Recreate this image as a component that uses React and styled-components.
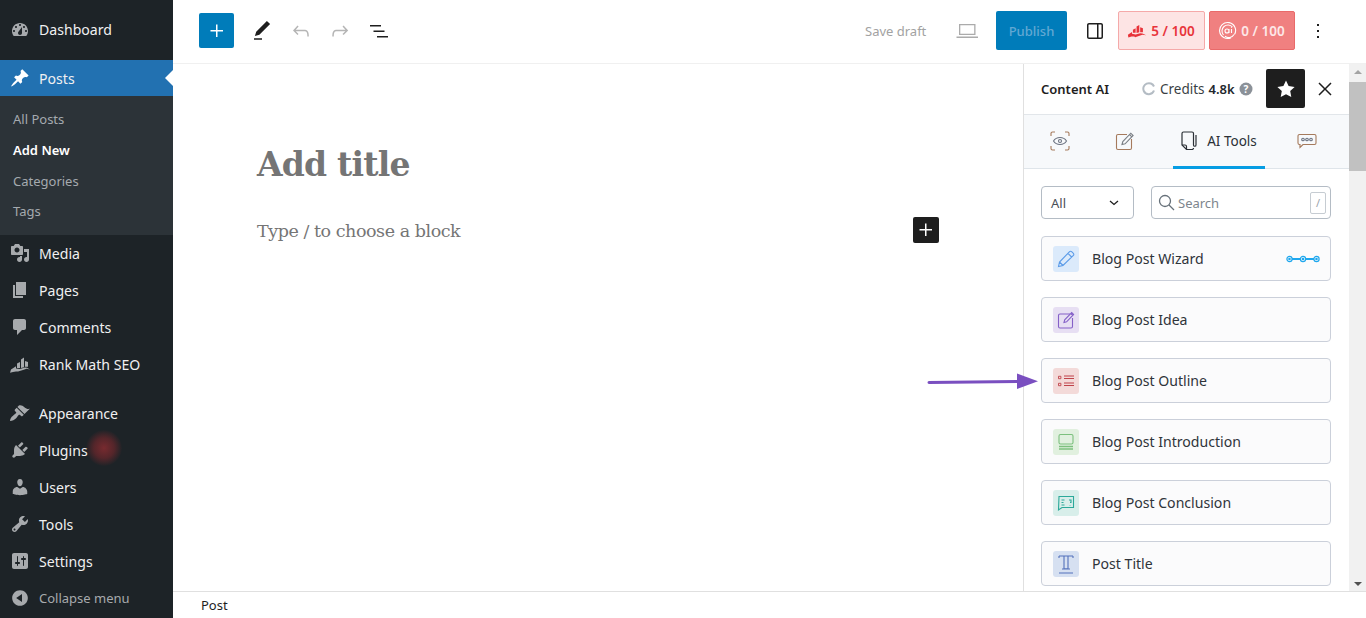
import React from "react";
import styled, { createGlobalStyle } from "styled-components";

const Global = createGlobalStyle`
  html, body { margin: 0; padding: 0; height: 100%; overflow: hidden; background: #fff; }
  * { box-sizing: border-box; }
  body { font-family: "Noto Sans", "Open Sans", sans-serif; }
`;

const Page = styled.div`
  position: relative;
  display: flex;
  width: 1366px;
  height: 618px;
  overflow: hidden;
`;

/* ---------- admin menu ---------- */
const Side = styled.nav`
  flex: 0 0 173px;
  background: #1d2327;
  padding-top: 11px;
  display: flex;
  flex-direction: column;
`;
const MenuRow = styled.div`
  position: relative;
  height: ${p => p.$h || 37}px;
  margin-top: ${p => p.$mt || 0}px;
  display: flex;
  align-items: center;
  padding-left: 10px;
  gap: 9px;
  font-size: 14.1px;
  color: ${p => (p.$dim ? "#a7aaad" : "#f0f0f1")};
  background: ${p => (p.$active ? "#2271b1" : "transparent")};
  svg { flex: 0 0 20px; fill: ${p => (p.$active ? "#fff" : "#a7aaad")}; }
  ${p => p.$dim && "font-size:13px;"}
`;
const CurrentNotch = styled.span`
  position: absolute;
  right: 0;
  top: 10px;
  border: 8px solid transparent;
  border-right-color: #fff;
  border-left-width: 0;
`;
const SubMenu = styled.div`
  background: #2c3338;
  padding: 8px 0 8px 13px;
`;
const SubItem = styled.div`
  height: 30.7px;
  display: flex;
  align-items: center;
  font-size: 13px;
  color: ${p => (p.$on ? "#fff" : "#a5aaaf")};
  font-weight: ${p => (p.$on ? 600 : 400)};
`;
const Glow = styled.span`
  position: absolute;
  left: 86px;
  top: -2px;
  width: 36px;
  height: 36px;
  border-radius: 50%;
  background: radial-gradient(circle, rgba(150,45,50,.75) 0%, rgba(130,40,45,.55) 40%, rgba(120,40,45,0) 72%);
`;
const Dash = ({ d, children }) => (
  <svg width="20" height="20" viewBox="0 0 20 20">{d ? <path d={d} /> : children}</svg>
);

/* ---------- main ---------- */
const Main = styled.div`
  flex: 1;
  min-width: 0;
  display: flex;
  flex-direction: column;
`;
const TopBar = styled.header`
  flex: 0 0 64px;
  border-bottom: 1px solid #f0f0f0;
  display: flex;
  align-items: center;
  padding: 0 29px 2px 26px;
`;
const Cluster = styled.div`
  display: flex;
  align-items: center;
  margin-left: ${p => p.$auto ? "auto" : "0"};
`;
const AddButton = styled.button`
  width: 35px;
  height: 35px;
  margin-right: 8px;
  border: 0;
  border-radius: 2px;
  background: #007cba;
  display: flex;
  align-items: center;
  justify-content: center;
  padding: 0;
  svg { fill: #fff; }
`;
const ToolIcon = styled.span`
  width: 39px;
  display: flex;
  justify-content: center;
  margin-left: ${p => p.$ml || 0}px;
  svg { fill: ${p => p.$c || "#1e1e1e"}; }
`;
const SaveDraft = styled.span`
  font-size: 13px;
  color: #a2a2a2;
  width: 63px;
  white-space: nowrap;
`;
const Publish = styled.button`
  width: 71px;
  height: 39px;
  margin: 0 8px 0 10px;
  border: 0;
  border-radius: 2px;
  background: #007cba;
  color: #62a8d3;
  font: 500 13px "Noto Sans", sans-serif;
  padding: 0;
`;
const Score = styled.button`
  width: ${p => p.$w}px;
  height: 39px;
  margin-left: ${p => p.$ml}px;
  border: 1px solid ${p => p.$line};
  border-radius: 2px;
  background: ${p => p.$bg};
  color: ${p => p.$fg};
  font: 600 13.5px "Noto Sans", sans-serif;
  display: flex;
  align-items: center;
  justify-content: center;
  gap: 4px;
  padding: 0 1px 0 0;
  white-space: nowrap;
`;
const Body = styled.div`
  flex: 1;
  min-height: 0;
  display: flex;
`;
const Canvas = styled.main`
  flex: 1;
  padding: 78px 84px 0;
`;
const Title = styled.h1`
  margin: 0;
  font: 700 33px/45px "DejaVu Serif", serif;
  letter-spacing: -.8px;
  color: #757575;
  white-space: nowrap;
`;
const BlockRow = styled.div`
  margin-top: 30px;
  display: flex;
  align-items: center;
  justify-content: space-between;
  height: 26px;
  width: 682px;
  font: 400 17.5px "DejaVu Serif", serif;
  letter-spacing: -.45px;
  color: #757575;
`;
const Placeholder = styled.span`
  padding-top: 1px;
`;
const BlockAdd = styled.span`
  width: 26px;
  height: 26px;
  background: #1e1e1e;
  border-radius: 2px;
  display: flex;
  align-items: center;
  justify-content: center;
  svg { fill: #fff; }
`;

/* ---------- Content AI panel ---------- */
const Panel = styled.aside`
  flex: 0 0 343px;
  border-left: 1px solid #e0e0e0;
  display: flex;
`;
const PanelInner = styled.div`
  flex: 1;
  min-width: 0;
  display: flex;
  flex-direction: column;
  overflow: hidden;
`;
const PanelHead = styled.div`
  flex: 0 0 51px;
  display: flex;
  align-items: center;
  padding: 0 0 1px 17px;
  border-bottom: 1px solid #e2e6ea;
`;
const HeadTitle = styled.strong`
  font-size: 13px;
  font-weight: 600;
  color: #1e1e1e;
  width: 101px;
`;
const Credits = styled.span`
  display: flex;
  align-items: center;
  font-size: 13.5px;
  color: #3a3f45;
  gap: 4px;
  width: 124px;
  b { font-weight: 600; color: #23282d; font-size: 13px; }
`;
const StarBtn = styled.span`
  width: 39px;
  height: 39px;
  background: #1e1e1e;
  border-radius: 2px;
  display: flex;
  align-items: center;
  justify-content: center;
  svg { fill: #fff; }
`;
const CloseBtn = styled.span`
  width: 40px;
  display: flex;
  justify-content: center;
  svg { fill: #1e1e1e; }
`;
const Tabs = styled.div`
  flex: 0 0 54px;
  display: flex;
  background: #f7f9fb;
  border-bottom: 1px solid #dfe5ea;
`;
const Tab = styled.div`
  width: ${p => p.$w}px;
  margin-left: ${p => p.$ml || 0}px;
  margin-bottom: -1px;
  display: flex;
  align-items: center;
  justify-content: center;
  gap: 9px;
  font-size: 13.5px;
  color: #2b3036;
  border-bottom: ${p => (p.$on ? "3px solid #069de3" : "3px solid transparent")};
`;
const Filters = styled.div`
  display: flex;
  gap: 17px;
  padding: 17px 18px 17px 17px;
`;
const SelectBox = styled.div`
  width: 93px;
  height: 33px;
  border: 1px solid #b4bcc5;
  border-radius: 4px;
  display: flex;
  align-items: center;
  justify-content: space-between;
  padding: 0 14px 0 9px;
  font-size: 13px;
  color: #4a5058;
`;
const SearchBox = styled.div`
  flex: 1;
  height: 33px;
  border: 1px solid #b4bcc5;
  border-radius: 4px;
  display: flex;
  align-items: center;
  gap: 3px;
  padding: 0 4px 0 6px;
  font-size: 13px;
  color: #7d858d;
`;
const SlashKey = styled.span`
  margin-left: auto;
  width: 16px;
  height: 22px;
  border: 1px solid #c6ccd2;
  border-radius: 2px;
  font-size: 11px;
  color: #9aa2aa;
  display: flex;
  align-items: center;
  justify-content: center;
`;
const ToolList = styled.div`
  display: flex;
  flex-direction: column;
  gap: 16px;
  padding: 0 18px 0 17px;
`;
const Card = styled.div`
  flex: 0 0 45px;
  border: 1px solid #cbd0da;
  border-radius: 4px;
  background: #fbfbfc;
  display: flex;
  align-items: center;
  padding: 0 10px 0 11px;
  font-size: 14.1px;
  color: #2f343a;
`;
const Tile = styled.span`
  width: 26px;
  height: 26px;
  border-radius: 3px;
  background: ${p => p.$bg};
  margin-right: 13px;
  display: flex;
  align-items: center;
  justify-content: center;
  svg { fill: none; stroke: ${p => p.$fg}; stroke-width: 1.1; }
`;
const WizardMark = styled.span`
  margin-left: auto;
  display: flex;
  svg { fill: none; stroke: #1ea7ee; stroke-width: 1.2; }
`;
const Scrollbar = styled.div`
  flex: 0 0 17px;
  background: #f1f1f1;
  display: flex;
  flex-direction: column;
  align-items: center;
`;
const ScrollUp = styled.span`
  margin-top: 6px;
  border: 4px solid transparent;
  border-top-width: 0;
  border-bottom: 4px solid #a3a3a3;
`;
const Thumb = styled.span`
  width: 17px;
  height: 89px;
  margin-top: 8px;
  background: #c1c1c1;
`;
const ScrollDown = styled.span`
  margin-top: auto;
  margin-bottom: 5px;
  border: 4px solid transparent;
  border-bottom-width: 0;
  border-top: 4px solid #505050;
`;
const Footer = styled.footer`
  flex: 0 0 27px;
  border-top: 1px solid #e0e0e0;
  padding-left: 28px;
  display: flex;
  align-items: center;
  font-size: 13px;
  color: #1e1e1e;
`;
const ArrowOverlay = styled.svg`
  position: absolute;
  left: 925px;
  top: 370px;
`;

const WP = {
  dashboard: "M3.76 16h12.48c1.1-1.37 1.76-3.11 1.76-5 0-4.42-3.58-8-8-8s-8 3.58-8 8c0 1.89.66 3.63 1.76 5zM10 4c.55 0 1 .45 1 1s-.45 1-1 1-1-.45-1-1 .45-1 1-1zM6 6c.55 0 1 .45 1 1s-.45 1-1 1-1-.45-1-1 .45-1 1-1zm8 0c.55 0 1 .45 1 1s-.45 1-1 1-1-.45-1-1 .45-1 1-1zm-5.37 5.55L12 7v6c0 1.1-.9 2-2 2s-2-.9-2-2c0-.57.24-1.08.63-1.45zM4 10c.55 0 1 .45 1 1s-.45 1-1 1-1-.45-1-1 .45-1 1-1zm12 0c.55 0 1 .45 1 1s-.45 1-1 1-1-.45-1-1 .45-1 1-1z",
  pin: "M10.44 3.02l1.82-1.82 6.36 6.35-1.83 1.82c-1.05-.68-2.48-.57-3.41.36l-.75.75c-.92.93-1.04 2.35-.35 3.41l-1.83 1.82-2.41-2.41-2.8 2.79c-.42.42-3.38 2.71-3.8 2.29s1.86-3.39 2.28-3.81l2.79-2.79L4.1 9.36l1.83-1.82c1.05.69 2.48.57 3.4-.36l.75-.75c.93-.92 1.05-2.35.36-3.41z",
  media: "M13 11V4c0-.55-.45-1-1-1h-1.67L9 1H5L3.67 3H2c-.55 0-1 .45-1 1v7c0 .55.45 1 1 1h10c.55 0 1-.45 1-1zM7 4.5c1.38 0 2.5 1.12 2.5 2.5S8.38 9.5 7 9.5 4.5 8.38 4.5 7 5.62 4.5 7 4.5zM14 6h5v10.5c0 1.38-1.12 2.5-2.5 2.5S14 17.88 14 16.5s1.12-2.5 2.5-2.5c.17 0 .34.02.5.05V9h-3V6zm-4 8.05V13h2v3.5c0 1.38-1.12 2.5-2.5 2.5S7 17.88 7 16.5 8.12 14 9.5 14c.17 0 .34.02.5.05z",
  page: "M6 15V2h10v13H6zm-1 1h8v2H3V5h2v11z",
  comment: "M5 2h9c1.1 0 2 .9 2 2v7c0 1.1-.9 2-2 2h-2l-5 5v-5H5c-1.1 0-2-.9-2-2V4c0-1.1.9-2 2-2z",
  rank: "M7 9.5l3-1.6V14H7zM11 5.5l3-2V13.2l-3 .8zM15 7l3 1v4.8h-3zM1 15.4l5-3.2v2.4L10 15l5-1.4 2 .2 3 1.8-3.4-.8-3.6 1.2-5 1.6H6l-3 .4-3 .8z",
  brush: "M14.48 11.06L7.41 3.99l1.5-1.5c.5-.56 2.3-.47 3.51.32 1.21.8 1.43 1.28 2.91 2.1 1.18.64 2.45 1.26 4.45.85zm-.71.71L6.7 4.7 4.93 6.47c-.39.39-.39 1.02 0 1.41l1.06 1.06c.39.39.39 1.03 0 1.42-.6.6-1.43 1.11-2.21 1.69-.35.26-.7.53-1.01.84C1.43 13.23 0 15.94 0 17.96c0 .03.02.04.04.04 2.02 0 4.73-1.43 6.07-2.77.31-.31.58-.66.84-1.01.58-.78 1.09-1.61 1.69-2.21.39-.39 1.03-.39 1.42 0l1.06 1.06c.39.39 1.02.39 1.41 0l1.77-1.77z",
  plugin: "M13.11 4.36L9.87 7.6 8 5.73l3.24-3.24c.35-.34 1.05-.2 1.56.32.52.51.66 1.21.31 1.55zm-8 1.77l.91-1.12 9.01 9.01-1.19.84c-.71.71-2.63 1.16-3.82 1.16H6.14L4.9 17.26c-.59.59-1.54.59-2.12 0-.59-.58-.59-1.53 0-2.12l1.24-1.24v-3.88c0-1.13.4-3.19 1.09-3.89zm7.26 3.97l3.24-3.24c.34-.35 1.04-.21 1.55.31.52.51.66 1.21.31 1.55l-3.24 3.25z",
  users: "M10 9.25c-2.27 0-2.73-3.44-2.73-3.44C7 4.02 7.82 2 9.97 2c2.16 0 2.98 2.02 2.71 3.81 0 0-.41 3.44-2.68 3.44zm0 2.57L12.72 10c2.39 0 4.52 2.33 4.52 4.53v2.49s-3.65 1.13-7.24 1.13c-3.65 0-7.24-1.13-7.24-1.13v-2.49c0-2.25 1.94-4.48 4.47-4.48z",
  tools: "M16.68 9.77c-1.34 1.34-3.3 1.67-4.95.99l-5.41 6.52c-.99.99-2.59.99-3.58 0s-.99-2.59 0-3.57l6.52-5.42c-.68-1.65-.35-3.61.99-4.95 1.28-1.28 3.12-1.62 4.72-1.06l-2.89 2.89 2.82 2.82 2.86-2.87c.53 1.58.18 3.39-1.08 4.65zM3.81 16.21c.4.39 1.04.39 1.43 0 .4-.4.4-1.04 0-1.43-.39-.4-1.03-.4-1.43 0-.39.39-.39 1.03 0 1.43z",
  settings: "M18 16V4c0-1.1-.9-2-2-2H4c-1.1 0-2 .9-2 2v12c0 1.1.9 2 2 2h12c1.1 0 2-.9 2-2zM8 11h1c.55 0 1 .45 1 1s-.45 1-1 1H8v1.5c0 .28-.22.5-.5.5s-.5-.22-.5-.5V13H6c-.55 0-1-.45-1-1s.45-1 1-1h1V5.5c0-.28.22-.5.5-.5s.5.22.5.5V11zm5-2h-1c-.55 0-1-.45-1-1s.45-1 1-1h1V5.5c0-.28.22-.5.5-.5s.5.22.5.5V7h1c.55 0 1 .45 1 1s-.45 1-1 1h-1v5.5c0 .28-.22.5-.5.5s-.5-.22-.5-.5V9z",
  collapse: "M10 2.16c4.33 0 7.84 3.51 7.84 7.84s-3.51 7.84-7.84 7.84S2.16 14.33 2.16 10 5.71 2.16 10 2.16zm2 11.72V6.12L6.18 9.97z",
};

const G = {
  plus: "M11 12.5V18h1.5v-5.5H18V11h-5.5V5.5H11V11H5.5v1.5z",
  pencil: "M20.1 5.1L16.9 2 6.2 12.7l-1.3 4.4 4.5-1.3L20.1 5.1zM4 20.8h8v-1.5H4v1.5z",
  undo: "M18.3 11.7c-.6-.6-1.4-.9-2.3-.9H6.7l2.9-3.3-1.1-1-4.5 5L8.5 16l1-1-2.7-2.7H16c.5 0 .9.2 1.3.5 1 1 1 3.4 1 4.5v.3h1.5v-.2c0-1.5 0-4.3-1.5-5.7z",
  redo: "M15.6 6.5l-1.1 1 2.9 3.3H8c-.9 0-1.7.3-2.3.9-1.4 1.5-1.4 4.2-1.4 5.6v.2h1.5v-.3c0-1.1 0-3.5 1-4.5.3-.3.7-.5 1.3-.5h9.2L14.5 15l1.1 1.1 4.6-4.6-4.6-5z",
  list: "M3 6h11v1.5H3V6zm3.5 5.5h11V13h-11v-1.5zM21 17H10v1.5h11V17z",
  laptop: "M4 5h16.5v11H4zM5.3 6.3v8.4h13.9V6.3zM1.5 17.6h21.5v1.3H1.5z",
  sidebar: "M18 4H6c-1.1 0-2 .9-2 2v12c0 1.1.9 2 2 2h12c1.1 0 2-.9 2-2V6c0-1.1-.9-2-2-2zM6 18.5a.5.5 0 01-.5-.5V6c0-.3.2-.5.5-.5h8v13H6zm12.5-.5c0 .3-.2.5-.5.5h-2.5v-13H18c.3 0 .5.2.5.5v12z",
  kebab: "M13 19h-2v-2h2v2zm0-6h-2v-2h2v2zm0-6h-2V5h2v2z",
  star: "M12 3.6l2.6 5.5 6 .8-4.4 4.2 1.1 6-5.3-2.9-5.3 2.9 1.1-6L3.4 9.9l6-.8z",
  close: "M13.06 12l5.47-5.47-1.06-1.06L12 10.94 6.53 5.47 5.47 6.53 10.94 12l-5.47 5.47 1.06 1.06L12 13.06l5.47 5.47 1.06-1.06z",
};
const Ico = ({ d, s = 24 }) => <svg width={s} height={s} viewBox="0 0 24 24"><path d={d} /></svg>;

const Pencil = () => (
  <svg width="22" height="22" viewBox="0 0 22 22"><path d="M3.5 18.5l1-4.5L14.6 3.6a1.4 1.4 0 012 0l1.8 1.8a1.4 1.4 0 010 2L8 17.5zM4.5 14L8 17.5M13 5.4l3.6 3.6" /></svg>
);
const Note = () => (
  <svg width="22" height="22" viewBox="0 0 22 22"><path d="M15 5H5a1.500 1.500 0 00-1.500 1.500V17.500A1.500 1.500 0 005 19h11a1.500 1.500 0 001.500-1.500V9" /><path d="M9 13.500l.7-2.600 7-7.300 1.900 1.900-7 7.300zM15.800 4.500l1.900 1.900" /></svg>
);
const Outline = () => (
  <svg width="20" height="18" viewBox="0 0 20 18"><path d="M2.500 4.300h2.400v2.400H2.500zM2.500 11.300h2.400v2.400H2.500z" strokeWidth=".9" /><path d="M8 4h10M8 6.500h10M8 11h10M8 13.500h10" strokeWidth="1" /></svg>
);
const Intro = () => (
  <svg width="20" height="20" viewBox="0 0 20 20"><rect x="3" y="2.500" width="14" height="9.500" rx="1.500" /><path d="M3 14.500h14M3 17h14" strokeWidth="1.600" /></svg>
);
const Conclude = () => (
  <svg width="20" height="20" viewBox="0 0 20 20"><path d="M3 3.500h14.500v11H6l-3.500 2.500z" /><path d="M5.500 7h3M5.500 9.500h2M5.500 12h3M13 7h2v2.500h-1M14 12v.500" /></svg>
);
const TitleT = () => (
  <svg width="20" height="22" viewBox="0 0 20 22"><path d="M3 3h14M3 3v2M17 3v2M8 3.300v12.500h4V3.300M6 16h8M3 20h14" /></svg>
);

const tools = [
  { name: "Blog Post Wizard", bg: "#dbeafb", fg: "#5b9be8", I: Pencil, wizard: true },
  { name: "Blog Post Idea", bg: "#e7dff3", fg: "#8560c8", I: Note },
  { name: "Blog Post Outline", bg: "#f3dad9", fg: "#c0434a", I: Outline },
  { name: "Blog Post Introduction", bg: "#e1f0df", fg: "#7cc07e", I: Intro },
  { name: "Blog Post Conclusion", bg: "#d8eeea", fg: "#2ba99a", I: Conclude },
  { name: "Post Title", bg: "#d6e0f1", fg: "#5371bb", I: TitleT },
];

export default function App() {
  return (
    <Page>
      <Global />
      <Side>
        <MenuRow $h={37}><Dash d={WP.dashboard} />Dashboard</MenuRow>
        <MenuRow $h={36} $mt={12} $active><Dash d={WP.pin} />Posts<CurrentNotch /></MenuRow>
        <SubMenu>
          <SubItem>All Posts</SubItem>
          <SubItem $on>Add New</SubItem>
          <SubItem>Categories</SubItem>
          <SubItem>Tags</SubItem>
        </SubMenu>
        <MenuRow><Dash d={WP.media} />Media</MenuRow>
        <MenuRow><Dash d={WP.page} />Pages</MenuRow>
        <MenuRow><Dash d={WP.comment} />Comments</MenuRow>
        <MenuRow><Dash d={WP.rank} />Rank Math SEO</MenuRow>
        <MenuRow $mt={12}><Dash d={WP.brush} />Appearance</MenuRow>
        <MenuRow><Dash d={WP.plugin} />Plugins<Glow /></MenuRow>
        <MenuRow><Dash d={WP.users} />Users</MenuRow>
        <MenuRow><Dash d={WP.tools} />Tools</MenuRow>
        <MenuRow><Dash d={WP.settings} />Settings</MenuRow>
        <MenuRow $h={36} $dim><Dash d={WP.collapse} />Collapse menu</MenuRow>
      </Side>
      <Main>
        <TopBar>
          <Cluster>
            <AddButton><Ico d={G.plus} /></AddButton>
            <ToolIcon><Ico d={G.pencil} /></ToolIcon>
            <ToolIcon $c="#b5b5b5"><Ico d={G.undo} /></ToolIcon>
            <ToolIcon $c="#b5b5b5"><Ico d={G.redo} /></ToolIcon>
            <ToolIcon><Ico d={G.list} /></ToolIcon>
          </Cluster>
          <Cluster $auto>
            <SaveDraft>Save draft</SaveDraft>
            <ToolIcon $ml={19} $c="#ababab"><Ico d={G.laptop} /></ToolIcon>
            <Publish>Publish</Publish>
            <ToolIcon><Ico d={G.sidebar} /></ToolIcon>
            <Score $w={87} $ml={4} $line="#f5a9a9" $bg="#fde4e4" $fg="#e8333a">
              <svg width="20" height="14" viewBox="0 0 22 14" fill="#e8333a">
                <path d="M6.500 5.500l3-1.500V9h-3zM10.500 2l3-1.500v8l-3 .8zM14.500 3l3 1v4.500h-3zM1 11l4.500-3v2l4 .8 5-1.300 2.500.2 4 2-4-.7-4 1.400-4 1.400-1-.8-3 .1-3.500 1z" />
              </svg>
              5 / 100
            </Score>
            <Score $w={86} $ml={4} $line="#e96a6a" $bg="#f08080" $fg="#fde8e8">
              <svg width="19" height="19" viewBox="0 0 19 19" fill="none" stroke="#fff" strokeWidth="1.100">
                <path d="M16.500 13.500A8 8 0 1013 16.700" />
                <path d="M14.500 6A6 6 0 105.500 14" />
                <path d="M11 8v4M11 10a2 2 0 10-4 0 2 2 0 004 0zM13.500 8v4M13.500 6.300v.6" />
                <path d="M7 15.300A6 6 0 0016 13.500" />
              </svg>
              0 / 100
            </Score>
            <ToolIcon $ml={3}><Ico d={G.kebab} /></ToolIcon>
          </Cluster>
        </TopBar>
        <Body>
          <Canvas>
            <Title>Add title</Title>
            <BlockRow>
              <Placeholder>Type / to choose a block</Placeholder>
              <BlockAdd><Ico d={G.plus} /></BlockAdd>
            </BlockRow>
          </Canvas>
          <Panel>
            <PanelInner>
              <PanelHead>
                <HeadTitle>Content AI</HeadTitle>
                <Credits>
                  <svg width="14" height="14" viewBox="0 0 14 14" fill="none" stroke="#b4bcc4" strokeWidth="2">
                    <path d="M12 4.500A5.500 5.500 0 101.800 9 5.500 5.500 0 0012 8.500" />
                  </svg>
                  Credits <b>4.8k</b>
                  <svg width="14" height="14" viewBox="0 0 14 14">
                    <circle cx="7" cy="7" r="6.500" fill="#8b9198" />
                    <text x="7" y="10.500" textAnchor="middle" fontSize="10" fontWeight="700" fill="#fff" fontFamily="Noto Sans">?</text>
                  </svg>
                </Credits>
                <StarBtn><Ico d={G.star} /></StarBtn>
                <CloseBtn><Ico d={G.close} /></CloseBtn>
              </PanelHead>
              <Tabs>
                <Tab $w={72}>
                  <svg width="20" height="20" viewBox="0 0 20 20" fill="none" stroke="#6b7280" strokeWidth="1.100">
                    <path d="M1 5V2.500A1.500 1.500 0 012.500 1H5M15 1h2.500A1.500 1.500 0 0119 2.500V5M19 15v2.500a1.500 1.500 0 01-1.500 1.500H15M5 19H2.500A1.500 1.500 0 011 17.500V15" stroke="#a57a5c" />
                    <path d="M3.500 10C5 7.700 7.300 6.500 10 6.500s5 1.200 6.500 3.500C15 12.300 12.700 13.500 10 13.500S5 12.300 3.500 10z" />
                    <circle cx="10" cy="10" r="1.500" />
                  </svg>
                </Tab>
                <Tab $w={58}>
                  <svg width="20" height="20" viewBox="0 0 20 20" fill="none" stroke="#7a7f85" strokeWidth="1.100">
                    <path d="M12 3.500H3A1.500 1.500 0 001.500 5v12A1.500 1.500 0 003 18.500h12a1.500 1.500 0 001.500-1.500V8" stroke="#a57a5c" />
                    <path d="M7 13.500l.8-3 8-8.300 2.300 2.300-8 8.300zM14.500 3.500l2.300 2.300" />
                  </svg>
                </Tab>
                <Tab $w={92} $ml={19} $on>
                  <svg width="17" height="20" viewBox="0 0 17 20" fill="none" stroke="#2b3036" strokeWidth="1.200">
                    <path d="M12.500 14V2.500A1.500 1.500 0 0011 1H2.500A1.500 1.500 0 001 2.500V14l4.500 4.500H11a1.500 1.500 0 001.500-1.500" />
                    <path d="M1 14h3a1.500 1.500 0 011.500 1.500v3M15 4v10a1.200 1.200 0 01-2.500 0" />
                  </svg>
                  AI Tools
                </Tab>
                <Tab $w={84}>
                  <svg width="20" height="16" viewBox="0 0 20 16" fill="none" stroke="#6b7280" strokeWidth="1.100">
                    <path d="M2.500 1.500h15A1.500 1.500 0 0119 3v7a1.500 1.500 0 01-1.500 1.500H6L3 14.500v-3h-.5A1.500 1.500 0 011 10V3a1.500 1.500 0 011.500-1.500z" stroke="#a57a5c" />
                    <circle cx="6" cy="6.500" r="1.300" /><circle cx="10" cy="6.500" r="1.300" /><circle cx="14" cy="6.500" r="1.300" />
                  </svg>
                </Tab>
              </Tabs>
              <Filters>
                <SelectBox>
                  All
                  <svg width="10" height="6" viewBox="0 0 10 6" fill="none" stroke="#1e1e1e" strokeWidth="1.300"><path d="M1 1l4 3.500L9 1" /></svg>
                </SelectBox>
                <SearchBox>
                  <svg width="17" height="17" viewBox="0 0 17 17" fill="none" stroke="#667079" strokeWidth="1.300"><circle cx="7" cy="7" r="5.500" /><path d="M11 11l5 5" /></svg>
                  Search
                  <SlashKey>/</SlashKey>
                </SearchBox>
              </Filters>
              <ToolList>
                {tools.map(({ name, bg, fg, I, wizard }) => (
                  <Card key={name}>
                    <Tile $bg={bg} $fg={fg}><I /></Tile>
                    {name}
                    {wizard && (
                      <WizardMark>
                        <svg width="34" height="8" viewBox="0 0 34 8">
                          <circle cx="3.500" cy="4" r="2.600" /><circle cx="17" cy="4" r="2.600" /><circle cx="30.500" cy="4" r="2.600" />
                          <circle cx="3.500" cy="4" r=".7" /><circle cx="17" cy="4" r=".7" /><circle cx="30.500" cy="4" r=".7" />
                          <path d="M6 4h8.500M19.500 4H28" strokeWidth="1.800" />
                        </svg>
                      </WizardMark>
                    )}
                  </Card>
                ))}
              </ToolList>
            </PanelInner>
            <Scrollbar><ScrollUp /><Thumb /><ScrollDown /></Scrollbar>
          </Panel>
        </Body>
        <Footer>Post</Footer>
      </Main>
      <ArrowOverlay width="115" height="24" viewBox="0 0 115 24">
        <path d="M4 12.500L92 11.500" stroke="#7a4fc0" strokeWidth="3" strokeLinecap="round" fill="none" />
        <path d="M92 3.500L113 11.300 92 19z" fill="#7a4fc0" />
      </ArrowOverlay>
    </Page>
  );
}
